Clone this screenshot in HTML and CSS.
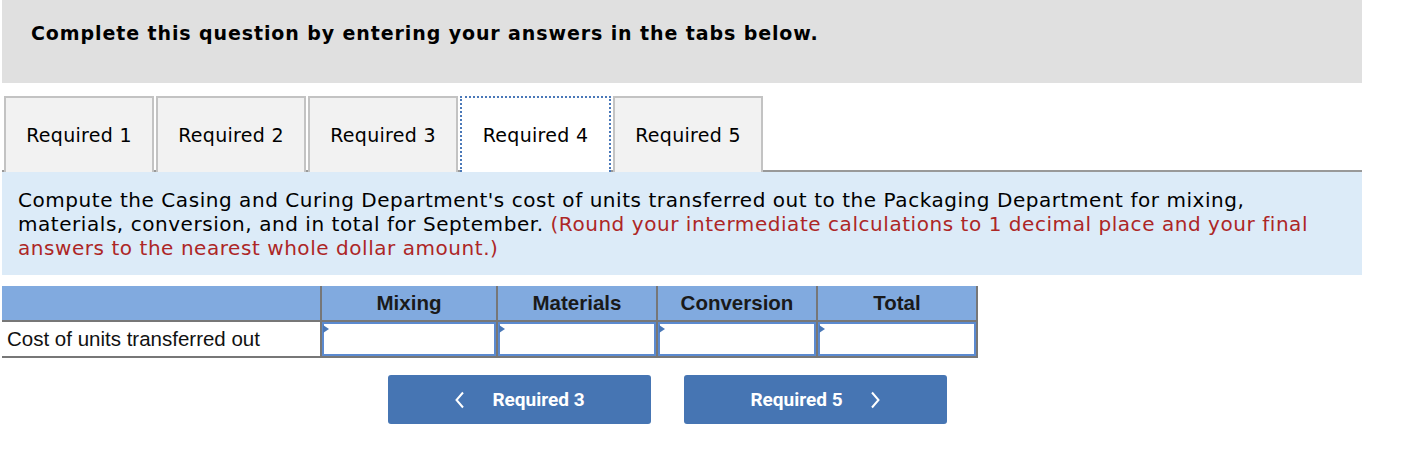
FILE: index.html
```html
<!DOCTYPE html>
<html>
<head>
<meta charset="utf-8">
<link rel="stylesheet" href="styles.css">
</head>
<body>
<div class="page">
  <div class="banner">Complete this question by entering your answers in the tabs below.</div>
  <div class="tabs">
    <div class="tab">Required 1</div>
    <div class="tab">Required 2</div>
    <div class="tab">Required 3</div>
    <div class="tab active">Required 4</div>
    <div class="tab">Required 5</div>
  </div>
  <div class="prompt">Compute the Casing and Curing Department's cost of units transferred out to the Packaging Department for mixing, materials, conversion, and in total for September. <span class="note">(Round your intermediate calculations to 1 decimal place and your final answers to the nearest whole dollar amount.)</span></div>
  <table class="grid">
    <tr class="head">
      <th class="label"></th>
      <th class="c1">Mixing</th>
      <th class="c2">Materials</th>
      <th class="c3">Conversion</th>
      <th class="c4">Total</th>
    </tr>
    <tr>
      <td class="label">Cost of units transferred out</td>
      <td class="cell"><div class="inp"></div></td>
      <td class="cell"><div class="inp"></div></td>
      <td class="cell"><div class="inp"></div></td>
      <td class="cell"><div class="inp"></div></td>
    </tr>
  </table>
  <div class="nav">
    <button class="btn"><svg class="chev" width="11" height="18" viewBox="0 0 11 18"><path d="M9 1.5 L2.5 9 L9 16.5" fill="none" stroke="#fff" stroke-width="2"/></svg><span class="btxt">Required 3</span></button>
    <button class="btn"><span class="btxt">Required 5</span><svg class="chev" width="11" height="18" viewBox="0 0 11 18"><path d="M2 1.5 L8.5 9 L2 16.5" fill="none" stroke="#fff" stroke-width="2"/></svg></button>
  </div>
</div>
</body>
</html>
```
FILE: styles.css
```css
html, body { margin: 0; padding: 0; background: #fff; }
.page { width: 1360px; margin-left: 2px; }
.banner {
  height: 83px;
  box-sizing: border-box;
  background: #e0e0e0;
  padding: 21px 0 0 29px;
  font-family: "DejaVu Sans", Verdana, sans-serif;
  font-weight: bold;
  font-size: 19px;
  letter-spacing: 0.9px;
  line-height: 24px;
  color: #000;
}
.tabs {
  display: flex;
  gap: 2px;
  margin-top: 13px;
  padding-left: 2px;
  border-bottom: 2px solid #999;
  height: 74px;
  box-sizing: content-box;
}
.tab {
  width: 150px;
  height: 76px;
  box-sizing: border-box;
  border: 2px solid #c3c3c3;
  border-bottom: none;
  background: #f2f2f2;
  display: flex;
  align-items: center;
  justify-content: center;
  font-family: "DejaVu Sans", Verdana, sans-serif;
  font-size: 19px;
  letter-spacing: 0.3px;
  color: #000;
  position: relative;
  z-index: 1;
}
.tab.active {
  background: #fff;
  border: 2px dotted #4a78b8;
  border-bottom: none;
  width: 151px;
}
.prompt {
  background: #dcebf8;
  padding: 16px 16px 15px 16px;
  font-family: "DejaVu Sans", Verdana, sans-serif;
  font-size: 20px;
  letter-spacing: 0.55px;
  line-height: 24px;
  color: #000;
}
.note { color: #ad2626; }
.grid {
  margin-top: 11px;
  border-collapse: collapse;
  font-family: "Liberation Sans", Arial, sans-serif;
  font-size: 20.5px;
}
.grid th {
  background: #81aadf;
  height: 34px;
  padding: 0;
  font-weight: bold;
  color: #1a1a1a;
  text-align: center;
  border-right: 2px solid #777;
  border-bottom: 2px solid #777;
}
.grid th.label { width: 318px; }
.grid th.c1 { width: 174px; }
.grid th.c2, .grid th.c3, .grid th.c4 { width: 158px; }
.grid td {
  height: 34px;
  padding: 0;
  border-right: 2px solid #777;
  border-bottom: 2px solid #777;
}
.grid td.label {
  padding-left: 5px;
  color: #111;
}
.grid td.cell { padding: 0; }
.inp {
  height: 34px;
  box-sizing: border-box;
  border: 2px solid #5b8ad0;
  background: #fff;
  position: relative;
}
.inp::before {
  content: "";
  position: absolute;
  left: -1px;
  top: 1px;
  border-left: 6px solid #4a78b8;
  border-top: 4px solid transparent;
  border-bottom: 4px solid transparent;
}
.nav {
  display: flex;
  gap: 33px;
  margin-top: 17px;
  padding-left: 386px;
}
.btn {
  width: 263px;
  height: 49px;
  background: #4675b3;
  border: none;
  border-radius: 3px;
  color: #fff;
  font-family: Roboto, "Liberation Sans", sans-serif;
  font-weight: bold;
  font-size: 19px;
  display: flex;
  align-items: center;
  justify-content: center;
  gap: 27px;
  padding: 0;
}
.chev { display: block; }
```
